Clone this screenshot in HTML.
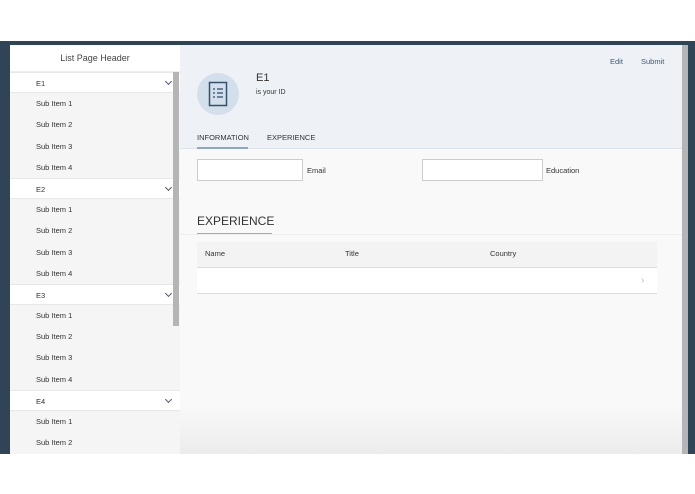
<!DOCTYPE html><html><head><style>
*{margin:0;padding:0;box-sizing:border-box}
body{width:695px;height:494px;background:#fff;position:relative;overflow:hidden;font-family:"Liberation Sans",sans-serif;color:#333}
.frame{position:absolute;left:0;top:41px;width:695px;height:413px;background:#2f4557}
.side{position:absolute;left:10px;top:45px;width:170px;height:409px;background:#f5f5f5;overflow:hidden}
.sh{height:27px;background:#fff;text-align:center;font-size:9px;line-height:27px;color:#444;border-bottom:1px solid #eee}
.row{height:21.2px;font-size:7.5px;line-height:21px;padding-left:26px;color:#333}
.g{background:#fff;border-top:1px solid #e8e8e8;border-bottom:1px solid #e8e8e8;position:relative}
.g:after{content:"";position:absolute;right:9px;top:6px;width:4px;height:4px;border-right:1px solid #557;border-bottom:1px solid #557;transform:rotate(45deg)}
.sb{position:absolute;left:173px;top:72px;width:6px;height:254px;background:#b5b5b5}
.main{position:absolute;left:180px;top:45px;width:502px;height:409px;background:linear-gradient(#f9f9f9 88%,#ececec)}
.hdr{position:absolute;left:0;top:0;width:502px;height:104px;background:#eef2f7;border-bottom:1px solid #dde3ea}
.rs{position:absolute;left:682px;top:45px;width:6px;height:409px;background:#b5b5b5}
.t{position:absolute;font-size:7.5px;color:#333;white-space:nowrap}
.inp{position:absolute;height:22px;background:#fff;border:1px solid #ccc}
</style></head><body>
<div class="frame"></div>
<div class="side">
<div class="sh">List Page Header</div>
<div class="row g">E1</div><div class="row">Sub Item 1</div><div class="row">Sub Item 2</div><div class="row">Sub Item 3</div><div class="row">Sub Item 4</div>
<div class="row g">E2</div><div class="row">Sub Item 1</div><div class="row">Sub Item 2</div><div class="row">Sub Item 3</div><div class="row">Sub Item 4</div>
<div class="row g">E3</div><div class="row">Sub Item 1</div><div class="row">Sub Item 2</div><div class="row">Sub Item 3</div><div class="row">Sub Item 4</div>
<div class="row g">E4</div><div class="row">Sub Item 1</div><div class="row">Sub Item 2</div>
</div>
<div class="sb"></div>
<div class="main">
<div class="hdr">
<div style="position:absolute;left:17px;top:28px;width:42px;height:42px;border-radius:50%;background:#d3dfea"></div>
<svg style="position:absolute;left:28px;top:36px" width="20" height="26" viewBox="0 0 20 26"><rect x="1.5" y="1.5" width="17" height="23" fill="none" stroke="#33526e" stroke-width="1.5"/><g stroke="#33526e" stroke-width="1.3"><line x1="5" y1="8" x2="7" y2="8"/><line x1="9" y1="8" x2="15" y2="8"/><line x1="5" y1="12" x2="7" y2="12"/><line x1="9" y1="12" x2="15" y2="12"/><line x1="5" y1="16" x2="7" y2="16"/><line x1="9" y1="16" x2="15" y2="16"/></g></svg>
<div class="t" style="left:76px;top:27px;font-size:11px">E1</div>
<div class="t" style="left:76px;top:44px;font-size:7px">is your ID</div>
<div class="t" style="left:430px;top:12px;color:#3a5a78">Edit</div>
<div class="t" style="left:461px;top:12px;color:#3a5a78">Submit</div>
<div class="t" style="left:17px;top:88px">INFORMATION</div>
<div style="position:absolute;left:17px;top:102px;width:51px;height:2px;background:#8aa8c8"></div>
<div class="t" style="left:87px;top:88px">EXPERIENCE</div>
</div>
<div class="inp" style="left:17px;top:114px;width:106px"></div>
<div class="t" style="left:127px;top:121px">Email</div>
<div class="inp" style="left:242px;top:114px;width:121px"></div>
<div class="t" style="left:366px;top:121px">Education</div>
<div class="t" style="left:17px;top:169px;font-size:12px">EXPERIENCE</div>
<div style="position:absolute;left:17px;top:188px;width:75px;height:1px;background:#aaa"></div>
<div style="position:absolute;left:0;top:189px;width:502px;height:1px;background:#eee"></div>
<div style="position:absolute;left:17px;top:197px;width:460px;height:26px;background:#f3f3f3;border-bottom:1px solid #ddd"></div>
<div class="t" style="left:25px;top:204px">Name</div>
<div class="t" style="left:165px;top:204px">Title</div>
<div class="t" style="left:310px;top:204px">Country</div>
<div style="position:absolute;left:17px;top:223px;width:460px;height:26px;background:#fff;border-bottom:1px solid #ddd"></div>
<div class="t" style="left:461px;top:230px;color:#bbb;font-size:10px">›</div>
</div>
<div class="rs"></div>
</body></html>
